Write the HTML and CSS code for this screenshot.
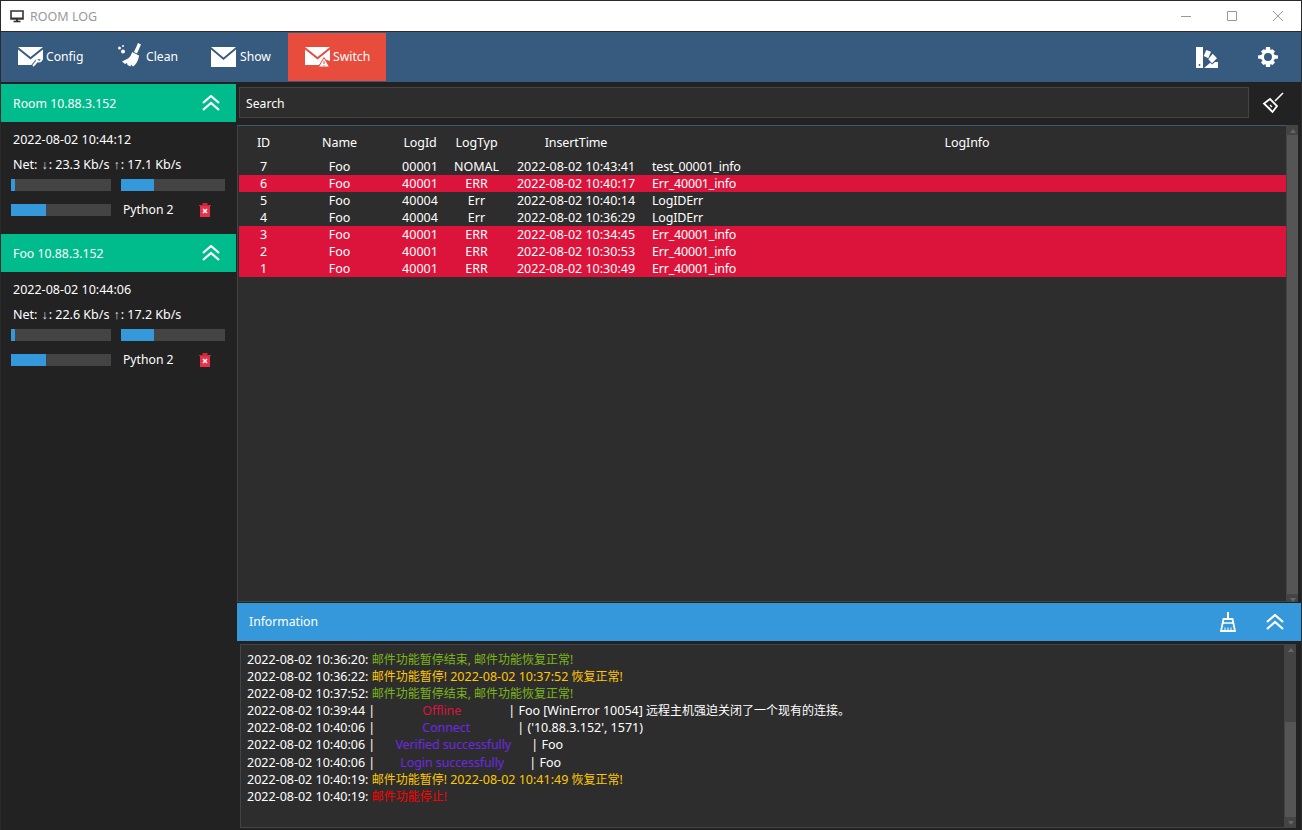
FILE: index.html
```html
<!DOCTYPE html>
<html lang="zh">
<head>
<meta charset="utf-8">
<title>ROOM LOG</title>
<link rel="stylesheet" href="styles.css">
</head>
<body>
<div class="window">
  <header class="titlebar">
    <svg class="title-icon" viewBox="0 0 14 13"><path d="M1 1h12v8H1z" fill="none" stroke="#333" stroke-width="1.6"/><path d="M1 7.5h12V9H1z" fill="#333"/><path d="M3.5 11.5h7" stroke="#333" stroke-width="1.6"/><path d="M6 9h2v2H6z" fill="#333"/></svg>
    <span class="title-text">ROOM LOG</span>
    <div class="win-controls">
      <svg class="win-btn" viewBox="0 0 12 12"><path d="M1 6.5h10" stroke="#999" fill="none"/></svg>
      <svg class="win-btn" viewBox="0 0 12 12"><path d="M1.5 1.5h9v9h-9z" stroke="#999" fill="none"/></svg>
      <svg class="win-btn" viewBox="0 0 12 12"><path d="M1 1l10 10M11 1L1 11" stroke="#999" fill="none"/></svg>
    </div>
  </header>

  <nav class="toolbar">
    <button class="tool">
      <svg class="tool-icon" viewBox="0 0 25 20"><path d="M0 0h25L12.5 10z" fill="#fff"/><path d="M0 2.500V18h15l5-6 5 1V2.500L12.500 12.500z" fill="#fff"/><path d="M15 19l5-6" stroke="#375a7f" stroke-width="4"/><path d="M15 19l5-6" stroke="#fff" stroke-width="2"/><circle cx="21" cy="12" r="2.600" fill="none" stroke="#fff" stroke-width="1.600"/></svg>
      <span>Config</span>
    </button>
    <button class="tool tool-clean">
      <svg class="tool-icon" viewBox="0 0 25 24"><circle cx="1.500" cy="5" r="1.500" fill="#fff"/><circle cx="5" cy="8.500" r="2" fill="#fff"/><circle cx="5" cy="3" r="1" fill="#fff"/><path d="M20 0l3 1.500-4 9-3-1.500z" fill="#fff"/><path d="M14 9l7 3.500c-.5 5-3 9-6 11l-2-2-.5 2-3-1.500-.5-2-2 1-3-2.500 3-1.500c3-1 6-3.500 7-7.500z" fill="#fff"/></svg>
      <span>Clean</span>
    </button>
    <button class="tool tool-show">
      <svg class="tool-icon" viewBox="0 0 25 20"><path d="M0 0h25L12.500 10.500z" fill="#fff"/><path d="M0 2.500V20h25V2.500L12.500 13z" fill="#fff"/></svg>
      <span>Show</span>
    </button>
    <button class="tool tool-switch">
      <svg class="tool-icon" viewBox="0 0 25 22"><path d="M0 0h25L12.500 10z" fill="#fff"/><path d="M0 2.500V18h14l5-6 6 2V2.500L12.500 12.500z" fill="#fff"/><path d="M19 10.500l5.500 9.500h-11z" fill="#fff" stroke="#e74c3c"/><path d="M18.500 14h1v3h-1zM18.500 18h1v1h-1z" fill="#e74c3c"/></svg>
      <span>Switch</span>
    </button>
    <div class="tool-right">
      <svg class="palette" viewBox="0 0 22 21"><path d="M0 0h7v21H0z" fill="#fff"/><path d="M10.300 3L15 4.700 12.300 11.300 7.700 9z" fill="#fff"/><path d="M16.700 6.700L21 11.300 16 16.300 12.300 12.300z" fill="#fff"/><path d="M14.300 15.700L16 17.500 19 15h3v6H8z" fill="#fff"/><circle cx="3.500" cy="18" r=".9" fill="#375a7f"/></svg>
      <svg class="gear" viewBox="0 0 20 20"><path d="M8 0h4l.5 3 2-.8L17 4.500l-1.500 2L17 8l3 .5v3l-3 .5-1.500 1.500 1.500 2L14.500 18l-2-1L12 20H8l-.5-3-2 1L3 15.500l1.500-2L3 12 0 11.500v-3L3 8l1.500-1.500-1.500-2L5.500 2.200l2 .8z" fill="#fff"/><circle cx="10" cy="10" r="4" fill="#375a7f"/></svg>
    </div>
  </nav>

  <div class="main">
    <aside class="sidebar">
      <section class="card">
        <div class="card-head"><span>Room 10.88.3.152</span>
          <svg class="chevrons" viewBox="0 0 18 16"><path d="M1 8l8-7 8 7M1 15l8-7 8 7" fill="none" stroke="#fff" stroke-width="2.200"/></svg>
        </div>
        <div class="card-body">
          <div class="card-date">2022-08-02 10:44:12</div>
          <div class="card-net">Net: <span class="net-arrow">↓</span>: 23.3 Kb/s <span class="net-arrow">↑</span>: 17.1 Kb/s</div>
          <div class="bars">
            <div class="bar bar-a"><div class="fill" style="width:4px"></div></div>
            <div class="bar bar-b"><div class="fill" style="width:33px"></div></div>
          </div>
          <div class="proc">
            <div class="bar bar-a"><div class="fill" style="width:35px"></div></div>
            <span class="proc-name">Python 2</span>
            <svg class="trash" viewBox="0 0 12 14"><path d="M0 2h12v1H0zM3.500 0h5v2h-5z" fill="#c9283e"/><path d="M1 3h10v11H1z" fill="#e8304a"/><path d="M4 6l4 4M8 6l-4 4" stroke="#fff" stroke-width="1.500"/></svg>
          </div>
        </div>
      </section>
      <section class="card">
        <div class="card-head"><span>Foo 10.88.3.152</span>
          <svg class="chevrons" viewBox="0 0 18 16"><path d="M1 8l8-7 8 7M1 15l8-7 8 7" fill="none" stroke="#fff" stroke-width="2.200"/></svg>
        </div>
        <div class="card-body">
          <div class="card-date">2022-08-02 10:44:06</div>
          <div class="card-net">Net: <span class="net-arrow">↓</span>: 22.6 Kb/s <span class="net-arrow">↑</span>: 17.2 Kb/s</div>
          <div class="bars">
            <div class="bar bar-a"><div class="fill" style="width:4px"></div></div>
            <div class="bar bar-b"><div class="fill" style="width:33px"></div></div>
          </div>
          <div class="proc">
            <div class="bar bar-a"><div class="fill" style="width:35px"></div></div>
            <span class="proc-name">Python 2</span>
            <svg class="trash" viewBox="0 0 12 14"><path d="M0 2h12v1H0zM3.500 0h5v2h-5z" fill="#c9283e"/><path d="M1 3h10v11H1z" fill="#e8304a"/><path d="M4 6l4 4M8 6l-4 4" stroke="#fff" stroke-width="1.500"/></svg>
          </div>
        </div>
      </section>
    </aside>

    <div class="content">
      <div class="search-row">
        <div class="search">Search</div>
        <svg class="broom" viewBox="0 0 22 22"><path d="M21 1L13 9" stroke="#fff" stroke-width="1.600"/><path d="M8 7l7 7-4.500 6L2 11.500z" fill="none" stroke="#fff" stroke-width="1.800"/><path d="M8 13l2 2M6 15l3 3" stroke="#fff" stroke-width="1.300"/></svg>
      </div>

      <div class="table-wrap">
        <div class="table">
          <div class="row head"><span>ID</span><span>Name</span><span>LogId</span><span>LogTyp</span><span>InsertTime</span><span>LogInfo</span></div>
          <div class="row"><span>7</span><span>Foo</span><span>00001</span><span>NOMAL</span><span>2022-08-02 10:43:41</span><span class="info">test_00001_info</span></div>
          <div class="row err"><span>6</span><span>Foo</span><span>40001</span><span>ERR</span><span>2022-08-02 10:40:17</span><span class="info">Err_40001_info</span></div>
          <div class="row"><span>5</span><span>Foo</span><span>40004</span><span>Err</span><span>2022-08-02 10:40:14</span><span class="info">LogIDErr</span></div>
          <div class="row"><span>4</span><span>Foo</span><span>40004</span><span>Err</span><span>2022-08-02 10:36:29</span><span class="info">LogIDErr</span></div>
          <div class="row err"><span>3</span><span>Foo</span><span>40001</span><span>ERR</span><span>2022-08-02 10:34:45</span><span class="info">Err_40001_info</span></div>
          <div class="row err"><span>2</span><span>Foo</span><span>40001</span><span>ERR</span><span>2022-08-02 10:30:53</span><span class="info">Err_40001_info</span></div>
          <div class="row err"><span>1</span><span>Foo</span><span>40001</span><span>ERR</span><span>2022-08-02 10:30:49</span><span class="info">Err_40001_info</span></div>
        </div>
        <div class="scrollbar sb-table"><i class="arrow up"></i><div class="thumb thumb-table"></div><i class="arrow down"></i></div>
      </div>

      <div class="info-bar">
        <span>Information</span>
        <div class="info-icons">
          <svg class="sweep" viewBox="0 0 16 20"><path d="M8 0v7" stroke="#fff" stroke-width="2"/><path d="M3.500 7h9l2.500 12H1z" fill="none" stroke="#fff" stroke-width="1.800"/><path d="M3 11h10" stroke="#fff" stroke-width="1.500"/><path d="M5 15.500v3M8 15.500v3M11 15.500v3" stroke="#fff"/></svg>
          <svg class="chevrons" viewBox="0 0 18 16"><path d="M1 8l8-7 8 7M1 15l8-7 8 7" fill="none" stroke="#fff" stroke-width="2.200"/></svg>
        </div>
      </div>

      <div class="log-wrap">
        <div class="log">
          <div>2022-08-02 10:36:20: <span class="c-green cjk">邮件功能暂停结束, 邮件功能恢复正常!</span></div>
          <div>2022-08-02 10:36:22: <span class="c-yellow"><span class="cjk">邮件功能暂停!</span> 2022-08-02 10:37:52 <span class="cjk">恢复正常!</span></span></div>
          <div>2022-08-02 10:37:52: <span class="c-green cjk">邮件功能暂停结束, 邮件功能恢复正常!</span></div>
          <div>2022-08-02 10:39:44 |<span class="c-crimson col-off">Offline</span>| Foo [WinError 10054] <span class="cjk">远程主机强迫关闭了一个现有的连接。</span></div>
          <div>2022-08-02 10:40:06 |<span class="c-purple col-con">Connect</span>| ('10.88.3.152', 1571)</div>
          <div>2022-08-02 10:40:06 |<span class="c-purple col-ver">Verified successfully</span>| Foo</div>
          <div>2022-08-02 10:40:06 |<span class="c-purple col-log">Login successfully</span>| Foo</div>
          <div>2022-08-02 10:40:19: <span class="c-yellow"><span class="cjk">邮件功能暂停!</span> 2022-08-02 10:41:49 <span class="cjk">恢复正常!</span></span></div>
          <div>2022-08-02 10:40:19: <span class="c-red cjk">邮件功能停止!</span></div>
        </div>
        <div class="scrollbar sb-log"><i class="arrow up"></i><div class="thumb thumb-log"></div><i class="arrow down"></i></div>
      </div>
    </div>
  </div>
</div>
</body>
</html>
```
FILE: styles.css
```css
* { box-sizing: border-box; }
html, body { margin: 0; padding: 0; height: 100%; }
body {
  font-family: "Noto Sans", "Noto Sans CJK SC", sans-serif;
  font-size: 12.5px;
  color: #fff;
  background: #222;
  overflow: hidden;
}
.window {
  width: 1302px;
  height: 830px;
  border: 1px solid #2a2a2a;
  border-bottom: 0;
  display: flex;
  flex-direction: column;
  background: #222;
}
.titlebar {
  height: 30px;
  flex: none;
  background: #fff;
  display: flex;
  align-items: center;
  padding-left: 9px;
  border-bottom: 1px solid #2a2a2a;
  box-sizing: content-box;
}
.title-icon { width: 14px; height: 13px; margin-right: 6px; }
.title-text { color: #999; font-size: 12.5px; }
.win-controls { margin-left: auto; display: flex; gap: 34px; padding-right: 17px; }
.win-btn { width: 12px; height: 12px; display: block; }

.toolbar {
  height: 50px;
  flex: none;
  background: #375a7f;
  display: flex;
  padding-top: 1px;
}
.tool {
  border: 0;
  background: none;
  color: #fff;
  font: inherit;
  font-size: 12.2px;
  display: flex;
  align-items: center;
  gap: 3px;
  padding: 0 0 1px 17px;
  width: 100px;
  height: 48px;
}
.tool-icon { width: 25px; height: 20px; flex: none; }
.tool-clean { width: 94px; padding-left: 17px; }
.tool-clean .tool-icon { width: 25px; height: 24px; margin-top: -4px; }
.tool-show { width: 93px; padding-left: 16px; gap: 4px; }
.tool-switch { width: 98px; background: #e74c3c; padding-left: 17px; }
.tool-switch .tool-icon { height: 22px; margin-top: 2px; }
.tool-right { margin-left: auto; display: flex; align-items: center; gap: 40px; padding-right: 23px; height: 48px; }
.palette { width: 22px; height: 21px; }
.gear { width: 20px; height: 20px; }

.main { flex: 1; display: flex; min-height: 0; }

.sidebar { width: 235px; flex: none; background: #222; padding-top: 2px; }
.card-head {
  height: 38px;
  background: #00bc8c;
  display: flex;
  align-items: center;
  justify-content: space-between;
  padding: 0 16px 0 12px;
  font-size: 12.3px;
}
.chevrons { width: 18px; height: 16px; }
.card-body { height: 112px; padding: 0 10px; }
.card-date { padding: 9px 0 0 2px; line-height: 18px; }
.card-net { padding: 7px 0 0 2px; line-height: 18px; }
.net-arrow { display: inline-block; width: 8px; text-align: center; font-family: "Liberation Sans", sans-serif; color: #ddd; }
.bars { display: flex; gap: 10px; margin-top: 5px; }
.bar { height: 12px; background: #444; }
.bar-a { width: 100px; }
.bar-b { width: 104px; }
.fill { height: 100%; background: #3498db; }
.proc { display: flex; align-items: center; margin-top: 10px; }
.proc-name { margin-left: 12px; width: 76px; font-size: 12.2px; }
.trash { width: 12px; height: 14px; }

.content { flex: 1; min-width: 0; display: flex; flex-direction: column; padding-left: 1px; }
.search-row { height: 43px; flex: none; display: flex; align-items: flex-start; padding: 5px 0 0 2px; }
.search {
  width: 1010px;
  height: 31px;
  background: #2d2d2d;
  border: 1px solid #444;
  line-height: 31px;
  padding-left: 6px;
  font-size: 12.2px;
}
.broom { width: 22px; height: 22px; margin: 5px 0 0 13px; }

.table-wrap { height: 477px; flex: none; display: flex; padding-right: 3px; }
.table {
  flex: 1;
  background: #2d2d2d;
  border: 1px solid #444;
  border-top-color: #3d5a78;
  padding: 0 0 0 1px;
}
.row {
  display: grid;
  grid-template-columns: 49px 103px 58px 55px 144px 1fr;
  height: 17px;
  line-height: 17px;
  text-align: center;
}
.head { height: 32px; line-height: 33px; letter-spacing: -.1px; }
.err { background: #dc143c; }
.info { text-align: left; padding-left: 4px; letter-spacing: -.2px; }
.head .info { text-align: center; padding: 0; }

.scrollbar { width: 11px; background: #444; flex: none; display: flex; flex-direction: column; align-items: center; }
.arrow { flex: none; width: 0; height: 0; border-left: 3.500px solid transparent; border-right: 3.500px solid transparent; }
.up { margin-top: 4px; border-bottom: 4px solid #666; }
.down { margin-top: 4px; border-top: 4px solid #666; }
.thumb { width: 100%; background: #555; }
.thumb-table { flex: 1; margin-top: 2px; }
.thumb-log { height: 95px; margin-top: 70px; }

.info-bar {
  height: 38px;
  flex: none;
  margin-top: 1px;
  background: #3498db;
  display: flex;
  align-items: center;
  padding: 0 17px 2px 12px;
  font-size: 12.2px;
}
.info-icons { margin-left: auto; display: flex; align-items: center; gap: 30px; margin-bottom: -2px; }
.sweep { width: 16px; height: 20px; }

.log-wrap { flex: 1; display: flex; min-height: 0; padding: 3px 5px 2px 3px; }
.log {
  flex: 1;
  background: #2d2d2d;
  border: 1px solid #444;
  padding: 6px 6px;
  line-height: 17.1px;
  white-space: nowrap;
}
.cjk { font-size: 12px; }
.c-green { color: #7cb518; }
.c-yellow { color: #ffc800; }
.c-crimson { color: #dc143c; }
.c-purple { color: #7028e4; }
.c-red { color: #f00; }
.col-off, .col-con, .col-ver, .col-log { display: inline-block; text-align: center; letter-spacing: -.1px; }
.col-off { width: 133px; }
.col-con { width: 142px; }
.col-ver { width: 156px; }
.col-log { width: 154px; }
```
